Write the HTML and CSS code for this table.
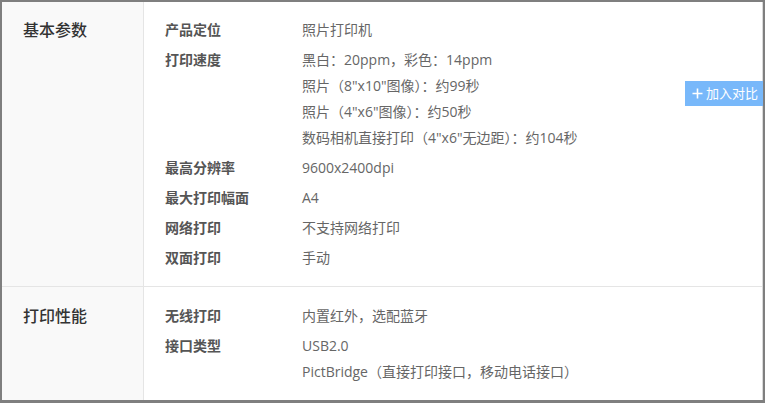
FILE: index.html
```html
<!DOCTYPE html>
<html lang="zh-CN">
<head>
<meta charset="utf-8">
<title>参数</title>
<link rel="stylesheet" href="styles.css">
</head>
<body>
<div class="page">
  <section class="group">
    <h2 class="group-title">基本参数</h2>
    <dl class="params">
      <dt>产品定位</dt><dd><p>照片打印机</p></dd>
      <dt>打印速度</dt><dd><p>黑白：20ppm，彩色：14ppm</p><p>照片（8"x10"图像）：约99秒</p><p>照片（4"x6"图像）：约50秒</p><p>数码相机直接打印（4"x6"无边距）：约104秒</p></dd>
      <dt>最高分辨率</dt><dd><p>9600x2400dpi</p></dd>
      <dt>最大打印幅面</dt><dd><p>A4</p></dd>
      <dt>网络打印</dt><dd><p>不支持网络打印</p></dd>
      <dt>双面打印</dt><dd><p>手动</p></dd>
    </dl>
  </section>
  <section class="group">
    <h2 class="group-title">打印性能</h2>
    <dl class="params">
      <dt>无线打印</dt><dd><p>内置红外，选配蓝牙</p></dd>
      <dt>接口类型</dt><dd><p>USB2.0</p><p>PictBridge（直接打印接口，移动电话接口）</p></dd>
    </dl>
  </section>
  <button class="compare"><svg class="plus" width="11" height="11" viewBox="0 0 11 11"><path d="M5.5 0.5v10M0.5 5.5h10" stroke="#fff" stroke-width="1.6" fill="none"/></svg>加入对比</button>
</div>
</body>
</html>
```

FILE: styles.css
```css
html, body {
  margin: 0;
  padding: 0;
}
body {
  background: #7f7f7f;
  padding: 2px 2px 3px 2px;
  height: 403px;
  box-sizing: border-box;
  font-family: "Open Sans", "Noto Sans CJK SC", sans-serif;
  overflow: hidden;
}
.page {
  position: relative;
  background: #fff;
  height: 398px;
  border-right: 1px solid #d9d9d9;
  box-sizing: border-box;
}
.group {
  display: grid;
  grid-template-columns: 142px 1fr;
}
.group + .group {
  border-top: 1px solid #e5e5e5;
}
.group:first-child {
  height: 284px;
}
.group:nth-child(2) {
  height: 113px;
}
.group-title {
  margin: 0;
  background: #f9f9f9;
  border-right: 1px solid #e5e5e5;
  padding: 15px 0 0 21px;
  font-size: 16px;
  line-height: 26px;
  font-weight: 500;
  color: #333;
}
.group:nth-child(2) .group-title,
.group:nth-child(2) .params {
  padding-top: 16px;
}
.params {
  margin: 0;
  padding: 15px 0 0 21px;
  display: grid;
  grid-template-columns: 137px 1fr;
  row-gap: 4px;
  align-content: start;
  font-size: 14px;
  line-height: 26px;
}
.params dt {
  font-weight: bold;
  color: #555;
}
.params dd {
  margin: 0;
  color: #666;
}
.params p {
  margin: 0;
}
.compare {
  position: absolute;
  top: 79px;
  right: -1px;
  width: 78px;
  height: 25px;
  border: 0;
  padding: 0 0 0 2px;
  background: #78b8fa;
  color: #fff;
  font-family: "Open Sans", "Noto Sans CJK SC", sans-serif;
  font-size: 13px;
  line-height: 25px;
  text-align: center;
  cursor: pointer;
  display: flex;
  align-items: center;
  justify-content: center;
}
.plus {
  margin-right: 3px;
}
```
